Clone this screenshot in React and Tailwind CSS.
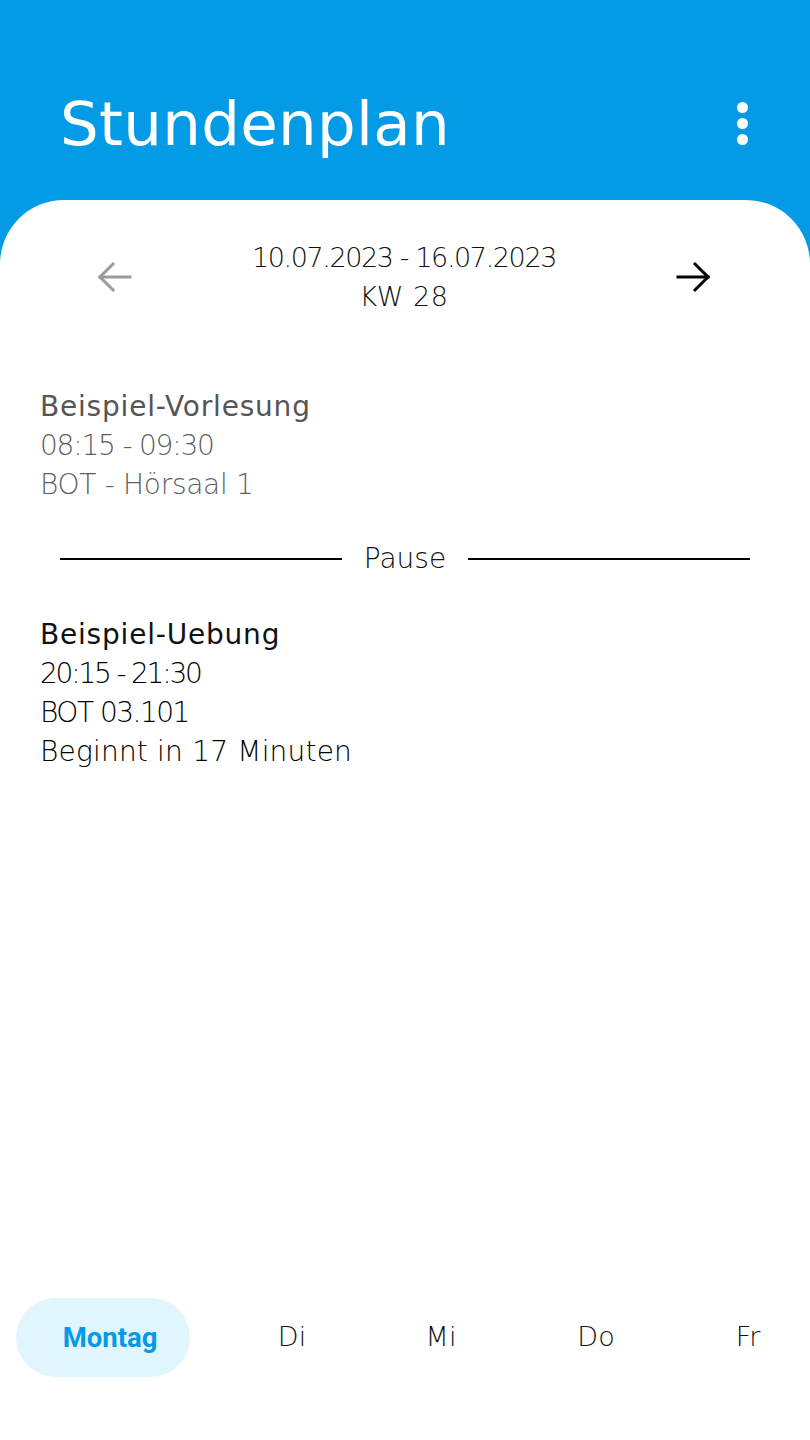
import React from 'react';

const font = { fontFamily: '"DejaVu Sans", "Noto Sans", sans-serif' };

const Arrow = ({ dir, color }) => (
  <svg width="36" height="32" viewBox="0 0 36 32" fill="none" stroke={color} strokeWidth="3" strokeLinecap="square">
    {dir === 'left' ? (
      <>
        <path d="M4 16H34" />
        <path d="M17 3L4 16L17 29" />
      </>
    ) : (
      <>
        <path d="M2 16H32" />
        <path d="M19 3L32 16L19 29" />
      </>
    )}
  </svg>
);

const Lesson = ({ title, lines, muted }) => (
  <div className={`px-10 ${muted ? 'text-[#5f5f5f]' : 'text-black'}`}>
    <div className={`text-[28px] leading-[39px] font-medium tracking-[0.8px] ${muted ? 'text-[#555555]' : 'text-[#111111]'}`}>{title}</div>
    {lines.map(l => (
      <div key={l.text} className={`text-[28px] leading-[39px] font-light ${l.track}`}>{l.text}</div>
    ))}
  </div>
);

const days = [
  { label: 'Di', ml: 'ml-[52px]' },
  { label: 'Mi', ml: 'ml-[49px]' },
  { label: 'Do', ml: 'ml-[55px]' },
  { label: 'Fr', ml: 'ml-[52px]' },
];

export default function App() {
  return (
    <div className="h-[1440px] bg-[#039be5] flex flex-col overflow-hidden" style={font}>
      <header className="h-[200px] shrink-0 flex items-start justify-between pl-[60px] pr-[62px] pt-[88px]">
        <h1 className="text-white text-[61px] leading-[72px] font-normal tracking-[0.3px]">Stundenplan</h1>
        <div className="flex flex-col items-center gap-[5px] pt-[14px]">
          <span className="w-[11px] h-[11px] rounded-full bg-white" />
          <span className="w-[11px] h-[11px] rounded-full bg-white" />
          <span className="w-[11px] h-[11px] rounded-full bg-white" />
        </div>
      </header>

      <main className="flex-1 bg-white rounded-t-[64px] flex flex-col">
        <div className="flex items-center justify-between pl-[96px] pr-[98px] pt-[38px]">
          <Arrow dir="left" color="#9a9a9a" />
          <div className="text-center text-[#111111] text-[27px] leading-[39px] font-light">
            <div className="tracking-[-1.4px]">10.07.2023 - 16.07.2023</div>
            <div className="tracking-[0.5px]">KW 28</div>
          </div>
          <Arrow dir="right" color="#000000" />
        </div>

        <div className="mt-[71px]">
          <Lesson
            muted
            title="Beispiel-Vorlesung"
            lines={[
              { text: '08:15 - 09:30', track: 'tracking-[-1.2px]' },
              { text: 'BOT - Hörsaal 1', track: 'tracking-[-0.3px]' },
            ]}
          />
        </div>

        <div className="flex items-center px-[60px] mt-[35px]">
          <div className="flex-1 h-[2px] bg-black" />
          <span className="px-[22px] text-[28px] leading-[39px] font-light text-[#111111]">Pause</span>
          <div className="flex-1 h-[2px] bg-black" />
        </div>

        <div className="mt-[37px]">
          <Lesson
            title="Beispiel-Uebung"
            lines={[
              { text: '20:15 - 21:30', track: 'tracking-[-2.2px]' },
              { text: 'BOT 03.101', track: 'tracking-[-1.5px]' },
              { text: 'Beginnt in 17 Minuten', track: 'tracking-[0.2px]' },
            ]}
          />
        </div>

        <nav className="mt-auto mb-[63px] flex items-center">
          <div className="ml-[16px] w-[174px] h-[79px] rounded-full bg-[#e1f5fe] flex items-center justify-center pl-[14px]">
            <span className="text-[#039be5] text-[27.5px] font-bold" style={{ fontFamily: 'Roboto, sans-serif' }}>Montag</span>
          </div>
          {days.map(d => (
            <div key={d.label} className={`${d.ml} w-[100px] text-center text-[27px] font-light text-[#111111]`}>
              {d.label}
            </div>
          ))}
        </nav>
      </main>
    </div>
  );
}
